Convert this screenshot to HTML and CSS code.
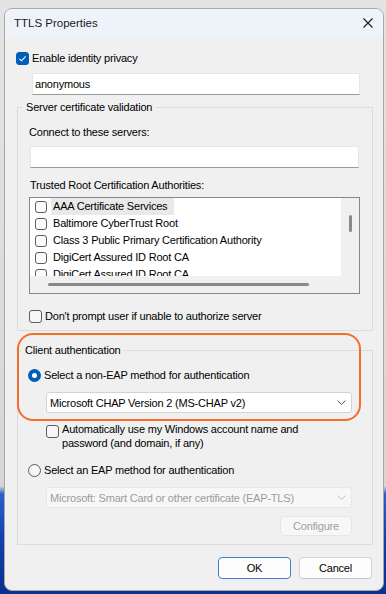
FILE: index.html
```html
<!DOCTYPE html>
<html lang="en">
<head>
<meta charset="utf-8">
<title>TTLS Properties</title>
<link rel="stylesheet" href="styles.css">
</head>
<body>
<div class="window">
  <div class="titlebar">
    <span class="title">TTLS Properties</span>
    <svg class="close" width="10" height="10" viewBox="0 0 10 10"><path d="M0.5 0.5L9.5 9.5M9.5 0.5L0.5 9.5" stroke="#1b1b1b" stroke-width="1.1" fill="none"/></svg>
  </div>
  <div class="content">
    <div class="check-row privacy">
      <span class="cb checked"><svg width="11" height="11" viewBox="0 0 11 11"><path d="M2.5 5.8L4.6 7.8L8.6 3.4" stroke="#fff" stroke-width="1.1" fill="none"/></svg></span>
      <span>Enable identity privacy</span>
    </div>
    <div class="textbox identity">anonymous</div>

    <fieldset class="group server">
      <legend>Server certificate validation</legend>
      <div class="field-label connect">Connect to these servers:</div>
      <div class="textbox servers"></div>
      <div class="field-label trusted">Trusted Root Certification Authorities:</div>
      <div class="listbox">
        <div class="list-items">
          <div class="list-row"><span class="cb small"></span><span class="item-text selected">AAA Certificate Services</span></div>
          <div class="list-row"><span class="cb small"></span><span class="item-text">Baltimore CyberTrust Root</span></div>
          <div class="list-row"><span class="cb small"></span><span class="item-text">Class 3 Public Primary Certification Authority</span></div>
          <div class="list-row"><span class="cb small"></span><span class="item-text">DigiCert Assured ID Root CA</span></div>
          <div class="list-row"><span class="cb small"></span><span class="item-text">DigiCert Assured ID Root CA</span></div>
        </div>
        <div class="vscroll"><span class="vthumb"></span></div>
        <div class="hscroll"><span class="hthumb"></span></div>
        <div class="corner"></div>
      </div>
      <div class="check-row noprompt">
        <span class="cb"></span>
        <span>Don't prompt user if unable to authorize server</span>
      </div>
    </fieldset>

    <fieldset class="group client">
      <legend>Client authentication</legend>
      <div class="radio-row first">
        <span class="radio on"></span>
        <span>Select a non-EAP method for authentication</span>
      </div>
      <div class="combo">
        <span>Microsoft CHAP Version 2 (MS-CHAP v2)</span>
        <svg class="chev" width="9" height="5" viewBox="0 0 9 5"><path d="M0.5 0.5L4.5 4.5L8.5 0.5" stroke="#5a5a5a" stroke-width="1" fill="none"/></svg>
      </div>
      <div class="check-row auto">
        <span class="cb"></span>
        <span>Automatically use my Windows account name and<br>password (and domain, if any)</span>
      </div>
      <div class="radio-row second">
        <span class="radio"></span>
        <span>Select an EAP method for authentication</span>
      </div>
      <div class="combo disabled">
        <span>Microsoft: Smart Card or other certificate (EAP-TLS)</span>
        <svg class="chev" width="9" height="5" viewBox="0 0 9 5"><path d="M0.5 0.5L4.5 4.5L8.5 0.5" stroke="#c2c2c2" stroke-width="1" fill="none"/></svg>
      </div>
      <div class="configure-row"><button class="btn configure" disabled>Configure</button></div>
    </fieldset>

    <div class="dialog-buttons">
      <button class="btn default">OK</button>
      <button class="btn">Cancel</button>
    </div>
  </div>
  <div class="annotation"></div>
</div>
</body>
</html>
```

FILE: styles.css
```css
* { box-sizing: border-box; }

html, body { margin: 0; }

body {
  width: 386px;
  height: 594px;
  overflow: hidden;
  padding: 8px 2px 0 4px;
  font-family: "Liberation Sans", Arial, sans-serif;
  font-size: 11px;
  letter-spacing: -0.2px;
  color: #000;
  background: linear-gradient(to bottom, #e4e4e4 0, #d6d6d6 486px, #2a5fce 494px, #123fae 540px, #0c2f8c 100%);
}

.window {
  position: relative;
  width: 380px;
  height: 583px;
  background: #f0f0f0;
  border: 1px solid #a9a9a9;
  border-radius: 8px;
  overflow: hidden;
  display: flex;
  flex-direction: column;
}

/* title bar */
.titlebar {
  height: 28px;
  flex: none;
  background: #eef3f9;
  display: flex;
  align-items: center;
  justify-content: space-between;
  padding: 0 10px 0 9px;
}

.title {
  font-size: 11.5px;
  letter-spacing: 0;
  color: #1a1a1a;
}

.close { display: block; margin-top: -1px; }

/* content */
.content {
  flex: 1;
  display: flex;
  flex-direction: column;
}

.check-row {
  display: flex;
  align-items: center;
  gap: 3px;
  line-height: 14px;
}

.cb {
  width: 13px;
  height: 13px;
  flex: none;
  border: 1px solid #5c5c5c;
  border-radius: 3px;
  background: #f7f7f7;
  display: flex;
  align-items: center;
  justify-content: center;
}

.cb.checked {
  background: #005fb8;
  border-color: #005fb8;
}

.cb.small {
  width: 12px;
  height: 12px;
  background: #fbfbfb;
}

.privacy {
  margin: 14px 0 0 11px;
}

.textbox {
  background: #fff;
  border: 1px solid #e6e6e6;
  border-bottom-color: #9a9a9a;
  height: 22px;
  line-height: 20px;
  padding-left: 2px;
}

.identity {
  margin: 8px 23px 0 27px;
}

/* group boxes */
.group {
  margin: 0 10px 0 12px;
  border: 1px solid #dcdcdc;
  padding: 0;
  min-width: 0;
}

.group legend {
  line-height: 14px;
  margin-left: -7px;
  padding: 0 4px;
}

.server {
  margin-top: 5px;
  padding: 0 12px 7px 11px;
}

.field-label { line-height: 14px; }

.connect { margin-top: 11px; }

.servers { margin: 7px 1px 0 1px; }

.trusted { margin-top: 10px; padding-left: 1px; }

.listbox {
  margin-top: 5px;
  border: 1px solid #82868e;
  display: grid;
  grid-template-columns: 1fr 18px;
  grid-template-rows: 78px 17px;
}

.list-items {
  background: #fff;
  overflow: hidden;
}

.list-row {
  height: 17px;
  display: flex;
  align-items: center;
  padding-left: 5px;
  white-space: nowrap;
}

.item-text {
  margin-left: 4px;
  padding: 0 2px;
  line-height: 17px;
}

.item-text.selected { background: #e9e9e9; padding-right: 7px; }

.vscroll, .hscroll, .corner { background: #f0f0f0; }

.vscroll {
  display: flex;
  justify-content: center;
  padding-top: 17px;
}

.vthumb {
  width: 3px;
  height: 17px;
  border-radius: 2px;
  background: #8a8a8a;
}

.hscroll {
  display: flex;
  align-items: center;
  padding-left: 18px;
}

.hthumb {
  width: 261px;
  height: 3px;
  border-radius: 2px;
  background: #8a8a8a;
}

.noprompt { margin-top: 15px; }

.client {
  margin-top: 12px;
  padding: 0 20px 8px 10px;
}

.client legend { margin-left: -7px; }

.radio-row {
  display: flex;
  align-items: center;
  gap: 3px;
  line-height: 14px;
}

.radio {
  width: 13px;
  height: 13px;
  flex: none;
  border-radius: 50%;
  border: 1px solid #5c5c5c;
  background: #f7f7f7;
}

.radio.on {
  border: 4px solid #005fb8;
  background: #fff;
}

.radio-row.first { margin-top: 11px; }
.radio-row.second { margin-top: 13px; }

.combo {
  margin: 10px 0 0 18px;
  height: 21px;
  background: #fff;
  border: 1px solid #d3d3d3;
  border-radius: 3px;
  padding: 0 5px 0 3px;
  display: flex;
  align-items: center;
  justify-content: space-between;
}

.combo.disabled {
  background: #f7f7f7;
  border-color: #e7e7e7;
  color: #9c9c9c;
}

.chev { display: block; }

.auto {
  margin: 9px 0 0 18px;
  align-items: flex-start;
}

.auto .cb { margin-top: 3px; }

.configure-row {
  display: flex;
  justify-content: flex-end;
  margin-top: 8px;
}

.btn {
  font: inherit;
  letter-spacing: inherit;
  color: #000;
  background: #fdfdfd;
  border: 1px solid #d3d3d3;
  border-bottom-color: #c2c2c2;
  border-radius: 4px;
  width: 73px;
  height: 22px;
  padding: 0;
}

.btn.configure {
  width: 72px;
  height: 20px;
  background: #f7f7f7;
  border-color: #e6e6e6;
  color: #a0a0a0;
}

.btn.default {
  border-color: #3f7fcf;
}

.dialog-buttons {
  display: flex;
  justify-content: flex-end;
  gap: 8px;
  margin: 12px 11px 0 0;
}

/* orange callout drawn over the dialog */
.annotation {
  position: absolute;
  left: 12px;
  top: 324px;
  width: 344px;
  height: 88px;
  border: 2px solid #f56d2b;
  border-radius: 16px;
  pointer-events: none;
}
```
